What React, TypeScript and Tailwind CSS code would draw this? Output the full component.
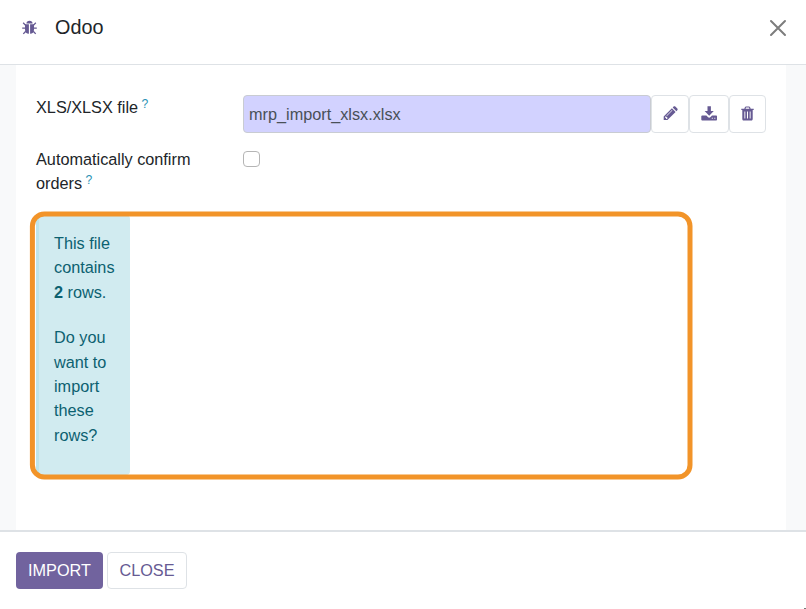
import React from "react";

function BugIcon() {
  return (
    <svg width="15" height="15" viewBox="0 0 15 15" fill="#665a93" stroke="#665a93">
      <path stroke="none" d="M4.4 3.4C4.5 1.6 5.7.8 7.5.8s3 .8 3.1 2.6z" />
      <path stroke="none" d="M3 4.2h3.9v9.5C4.5 13.7 3 12 3 9.4zM8.1 4.2H12v5.2c0 2.6-1.5 4.3-3.9 4.3z" />
      <path fill="none" strokeWidth="1.3" d="M3.6 5.4 1.2 2.8M.2 8.2h3M3.8 11.2 1.3 13.9M11.4 5.4l2.4-2.6M11.8 8.2h3M11.2 11.2l2.5 2.7" />
    </svg>
  );
}

function PencilIcon() {
  return (
    <svg width="15" height="15" viewBox="0 0 15 15" fill="#665a93">
      <path fillRule="evenodd" d="M.7 10.4 8.9 2.2l3.7 3.7-8.2 8.2H.7zM2 11v.8h1.1v1.1h.8l.8-.8L2.8 10.2zM3.5 9.5l.4.4 5.5-5.5-.4-.4z" />
      <path d="m9.7 1.5.9-.9c.5-.5 1.2-.5 1.7 0l2 2c.5.5.5 1.2 0 1.7l-.9.9z" />
    </svg>
  );
}

function DownloadIcon() {
  return (
    <svg width="17" height="15" viewBox="0 0 17 15" fill="#665a93">
      <path d="M6.5.3h3.4v4.8h2.9L8.2 9.8 3.6 5.1h2.9z" />
      <path fillRule="evenodd" d="M1.2 9.5h4.2l1.7 1.7c.6.6 1.6.6 2.2 0L11 9.5h4.2c.5 0 .8.4.8.8v3.2c0 .5-.3.9-.8.9h-14c-.5 0-.9-.4-.9-.9v-3.2c0-.4.4-.8.9-.8zm9.6 2.3v1h1v-1zm2.5 0v1h1v-1z" />
    </svg>
  );
}

function TrashIcon() {
  return (
    <svg width="13" height="15" viewBox="0 0 13 15" fill="#665a93">
      <path fillRule="evenodd" d="M.3 2.7h3L4 1.1C4.2.7 4.6.5 5 .5h3c.4 0 .8.2 1 .6l.7 1.6h3v1.2h-1v9c0 .8-.5 1.5-1.2 1.5h-8c-.7 0-1.2-.7-1.2-1.5v-9h-1zm4.3 0h3.8L8 1.6H5zM3.4 5.5v7h.9v-7zm2.6 0v7h1v-7zm2.7 0v7h.9v-7z" />
    </svg>
  );
}

function Hint() {
  return <sup className="relative top-[-5.5px] ml-[-1px] align-baseline text-[12.2px] leading-none text-[#2a93b5]">?</sup>;
}

const iconButton = "flex h-[38px] items-center justify-center rounded-[4px] border border-[#dee2e6] bg-white pb-[2px]";

export default function App() {
  return (
    <div className="relative flex h-[609px] w-[806px] flex-col overflow-hidden bg-white font-['Liberation_Sans',Arial,sans-serif] text-[16.25px] leading-[24.4px] text-[#212529]">
      <header className="flex h-[65px] shrink-0 items-start border-b border-[#dee2e6] pt-[12px] pr-[19px] pl-[22px]">
        <span className="mt-[8px]"><BugIcon /></span>
        <h1 className="ml-[18px] text-[19.8px] leading-[30px]">Odoo</h1>
        <button aria-label="Close" className="mt-[7px] ml-auto">
          <svg width="18" height="18" viewBox="0 0 18 18" fill="none" stroke="#7d7d7d" strokeWidth="2" strokeLinecap="round">
            <path d="m2 2 14 14M16 2 2 16" />
          </svg>
        </button>
      </header>
      <main className="h-[465px] shrink-0 bg-[#f8f9fa] pr-[20px] pl-[16px]">
        <section className="h-full bg-white pt-[30px] pr-[20px] pl-[20px]">
          <div className="flex h-[38px]">
            <label className="w-[207px] shrink-0">XLS/XLSX file <Hint /></label>
            <div className="flex h-[38px] w-[408px] items-center rounded-[4px] border border-[#c9ccd2] bg-[#d2d2ff] pl-[5px] text-[#495057]">
              mrp_import_xlsx.xlsx
            </div>
            <button aria-label="Edit" className={iconButton + " w-[38px]"}><PencilIcon /></button>
            <button aria-label="Download" className={iconButton + " w-[40px]"}><DownloadIcon /></button>
            <button aria-label="Delete" className={iconButton + " w-[37px]"}><TrashIcon /></button>
          </div>
          <div className="mt-[14px] flex h-[49px]">
            <label className="w-[207px] shrink-0 pr-[40px]">Automatically confirm orders <Hint /></label>
            <span role="checkbox" aria-checked="false" className="mt-[4px] h-[16px] w-[17px] rounded-[4px] border border-[#b5b5b5]" />
          </div>
          <div className="relative mt-[19px] h-[260px]">
            <div className="h-[260px] w-[94px] rounded-[4px] border-l-[3px] border-[#bee5eb] bg-[#d1ebf0] pt-[16px] pl-[15px] text-[#0c6170]">
              <p>This file<br />contains<br /><b>2</b> rows.</p>
              <p className="mt-[21px]">Do you<br />want to<br />import<br />these<br />rows?</p>
            </div>
            <svg className="absolute top-[-5px] left-[-8px]" width="668" height="272" fill="none" stroke="#f29429" strokeWidth="5">
              <rect x="4.4" y="4" width="657.6" height="263" rx="12" />
            </svg>
          </div>
        </section>
      </main>
      <footer className="flex flex-1 items-start gap-[4px] border-t-2 border-[#dee2e6] pt-[20px] pl-[16px]">
        <button className="h-[37px] w-[87px] rounded-[4px] bg-[#71639e] text-white">IMPORT</button>
        <button className="h-[37px] w-[80px] rounded-[4px] border border-[#dee2e6] bg-white text-[#665a93]">CLOSE</button>
      </footer>
      <span className="absolute right-0 bottom-0 h-px w-[2px] bg-[#777]" />
    </div>
  );
}
